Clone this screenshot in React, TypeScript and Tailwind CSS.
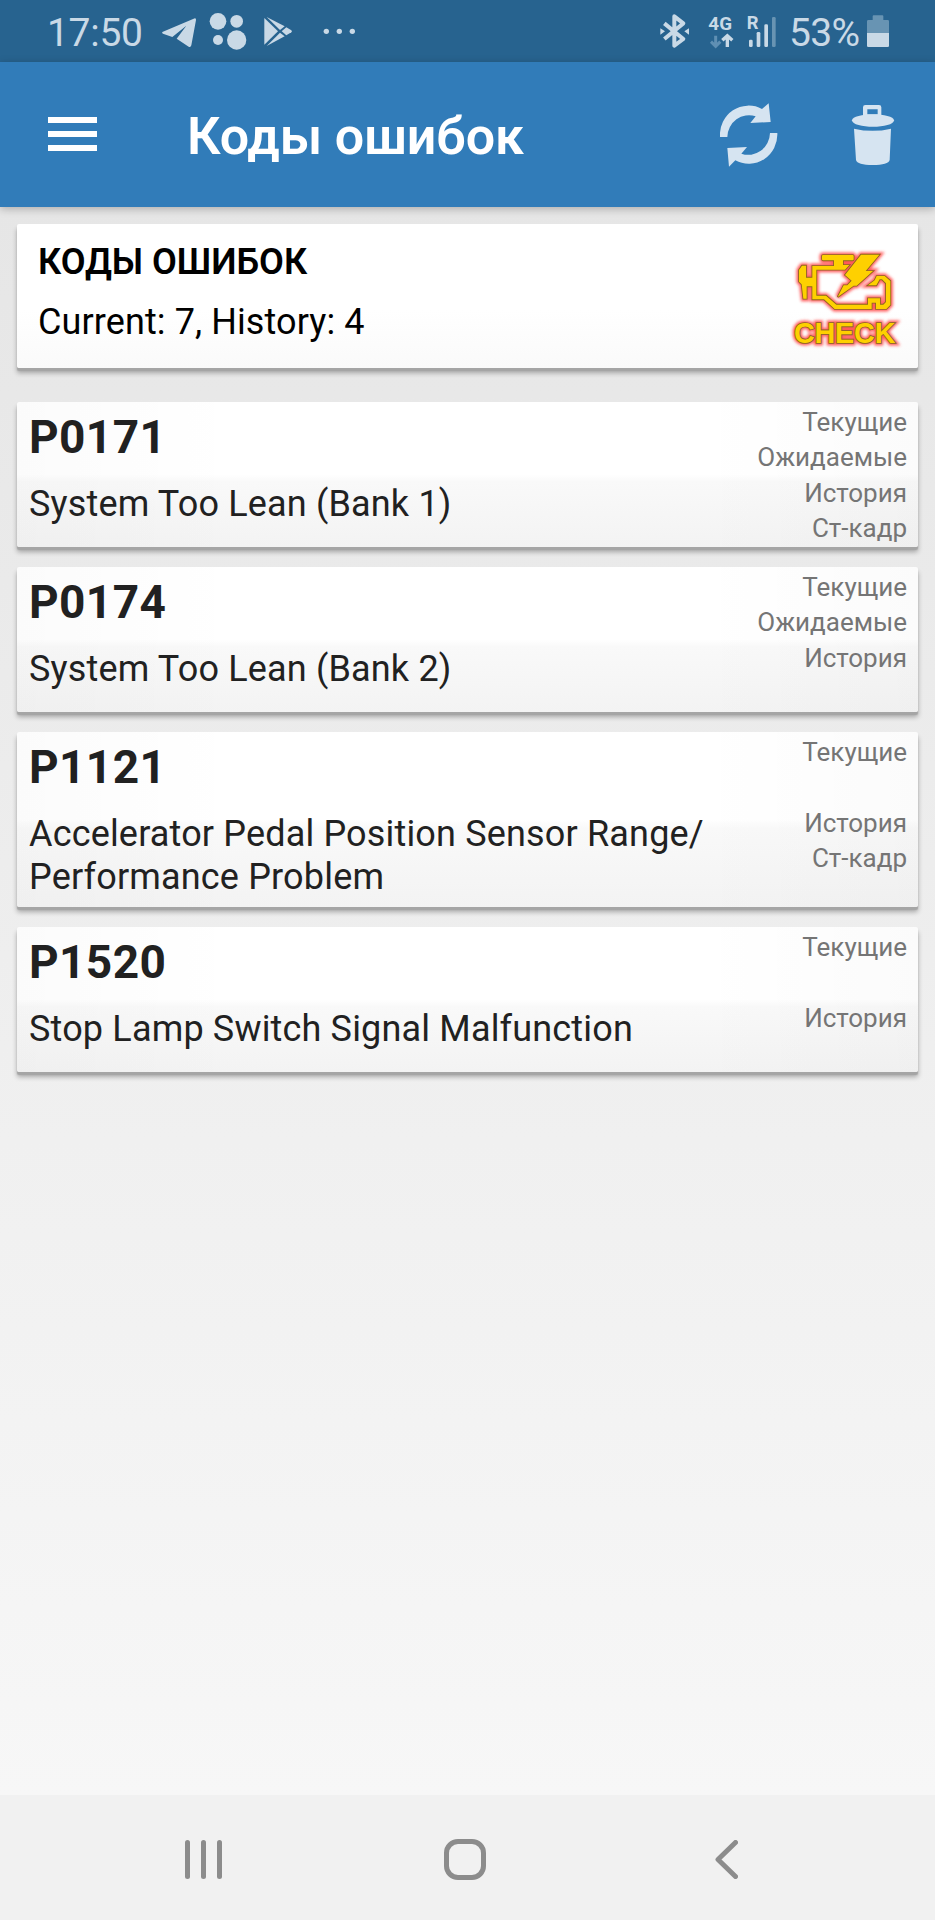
import React from "react";

interface TroubleCode {
  code: string;
  description: string;
  labels: string[];
}

const codes: TroubleCode[] = [
  {
    code: "P0171",
    description: "System Too Lean (Bank 1)",
    labels: ["Текущие", "Ожидаемые", "История", "Ст-кадр"],
  },
  {
    code: "P0174",
    description: "System Too Lean (Bank 2)",
    labels: ["Текущие", "Ожидаемые", "История", ""],
  },
  {
    code: "P1121",
    description: "Accelerator Pedal Position Sensor Range/ Performance Problem",
    labels: ["Текущие", "", "История", "Ст-кадр"],
  },
  {
    code: "P1520",
    description: "Stop Lamp Switch Signal Malfunction",
    labels: ["Текущие", "", "История", ""],
  },
];

const StatusBar = () => (
  <div className="flex h-[62px] shrink-0 items-center bg-[#27638f] pl-[47px] pr-[46px] text-[#c9d9e6]">
    <span className="w-[114px] pt-[3px] text-[39px] leading-[46px] tracking-[-0.3px]">17:50</span>
    {/* Telegram, dots, Play Store, more */}
    <svg className="h-[62px] w-[200px]" viewBox="480 0 600 186" fill="currentColor">
      <path d="M484 96 Q482 99 486 101 L514 111 L556 77 L527 116 L563 140 Q569 143 571 136 L585 60 Q586 53 578 56 Z" />
      <circle cx="651" cy="64" r="25" />
      <circle cx="707" cy="64" r="19" />
      <circle cx="651" cy="120" r="15" />
      <circle cx="707" cy="120" r="29" />
      <path d="M790 54 L831 94 L790 134 Z" />
      <path d="M797 51 L851 79 L837 90 Z" />
      <path d="M797 138 L851 109 L837 98 Z" />
      <path d="M856 82 L871 91 Q875 94 871 97 L856 106 L842 94 Z" />
      <circle cx="976" cy="94" r="8" />
      <circle cx="1015" cy="94" r="8" />
      <circle cx="1054" cy="94" r="8" />
    </svg>
    <div className="grow" />
    {/* Bluetooth, mobile data, signal */}
    <svg className="h-[62px] w-[120px]" viewBox="50 0 360 186" fill="currentColor">
      <path
        d="M69 70 L126 117 L99 137 V49 L126 70 L69 117"
        fill="none"
        stroke="currentColor"
        strokeWidth="12"
        strokeLinejoin="round"
      />
      <path d="M57 85 L71 94 L57 104 Z M143 85 L129 94 L143 104 Z" />
      <text x="201" y="91" fontSize="55" fontWeight="700" fontFamily="Roboto, sans-serif" textLength="71" lengthAdjust="spacingAndGlyphs">4G</text>
      <text x="316" y="86" fontSize="55" fontWeight="700" fontFamily="Roboto, sans-serif">R</text>
      <path d="M223 107 V138 M209 125 L223 139 L237 125" fill="none" stroke="#5f8fb3" strokeWidth="9" />
      <path d="M258 141 V108 M243 121 L258 107 L273 121" fill="none" stroke="currentColor" strokeWidth="10" />
      <rect x="323" y="119" width="11" height="22" rx="4" />
      <rect x="346" y="96" width="11" height="45" rx="4" />
      <rect x="369" y="73" width="11" height="68" rx="4" />
      <rect x="392" y="51" width="11" height="90" rx="4" fill="#6894b3" />
    </svg>
    <span className="ml-[11px] w-[78px] whitespace-nowrap pt-[3px] text-[39px] leading-[46px] tracking-[-0.7px]">53%</span>
    <svg className="h-[62px] w-[22px]" viewBox="681 0 66 186">
      <path d="M685 60 H698 V49 Q698 46 701 46 H727 Q730 46 730 49 V60 H743 Q747 60 747 64 V99 H681 V64 Q681 60 685 60 Z" fill="#6894b3" />
      <path d="M681 99 H747 V137 Q747 141 743 141 H685 Q681 141 681 137 Z" fill="#c9d9e6" />
    </svg>
  </div>
);

const AppBar = () => (
  <header className="relative flex h-[145px] shrink-0 items-center bg-[#317cb9] pl-[48px] text-white shadow-[0_2px_8px_rgba(0,0,0,0.25)]">
    <div className="mt-[-2px] flex w-[49px] flex-col gap-[8px]">
      <div className="h-[6px] bg-white" />
      <div className="h-[6px] bg-white" />
      <div className="h-[6px] bg-white" />
    </div>
    <h1 className="ml-[90px] grow pt-[5px] text-[52px] font-semibold leading-[60px] tracking-[-0.1px]">Коды ошибок</h1>
    <svg className="h-[145px] w-[215px]" viewBox="240 186 645 435" fill="#d6e4f1">
      {/* Refresh */}
      <path d="M240 411 A86 88 0 0 1 366 327 L386 310 L392 366 L331 369 L347 349 A65 67 0 0 0 262 411 Z" />
      <path d="M412 399 A86 88 0 0 1 286 481 L267 500 L262 444 L321 441 L304 461 A65 67 0 0 0 390 399 Z" />
      {/* Trash can */}
      <path d="M669 348 V322 Q669 315 676 315 H717 Q724 315 724 322 V348 Z M682 328 V343 H713 V328 Z" fillRule="evenodd" />
      <path d="M636 361 C636 338 762 338 762 361 C762 387 636 387 636 361 Z" />
      <path d="M642 386 Q698 399 753 386 L749 480 Q745 495 698 495 Q652 495 648 480 Z" />
    </svg>
  </header>
);

const CheckEngine = () => (
  <svg className="h-[110px] w-[120px]" viewBox="50 80 360 330">
    <defs>
      <filter id="glow" x="-20%" y="-20%" width="140%" height="140%">
        <feGaussianBlur stdDeviation="5" />
      </filter>
      <g id="engine">
        <path d="M158 119 H247 Q250 119 250 122 V132 Q250 135 247 135 H218 V149 H237 L224 163 H138 V241 H167 L198 268 H293 V249 H329 V268 H339 L347 260 V204 L335 192 H328 L318 210 H293 L313 195 L319 182 H343 L360 197 V269 L348 281 H317 V262 H304 V281 H193 L161 252 H126 V213 H109 V250 H99 L94 207 L86 199 V164 L95 151 H107 V187 H126 V152 H191 V135 H158 Q155 135 155 132 V122 Q155 119 158 119 Z" />
        <path d="M272 118 H327 L286 167 H308 L259 211 H250 L202 245 L220 210 H231 L244 196 L224 179 Z" />
        <text x="71" y="383" fontSize="86" fontWeight="700" fontFamily="'Liberation Sans', sans-serif" textLength="304">CHECK</text>
      </g>
    </defs>
    <use href="#engine" fill="#ff3333" stroke="#ff3333" strokeWidth="15" opacity="0.8" filter="url(#glow)" />
    <use href="#engine" fill="#fed000" stroke="#8a6620" strokeWidth="5" paintOrder="stroke" />
  </svg>
);

const CodeCard = ({ code, description, labels }: TroubleCode) => (
  <div className="flex min-h-[145px] rounded-[2px] bg-[linear-gradient(to_right,rgba(0,0,0,0.015),transparent_25%,transparent_75%,rgba(0,0,0,0.015)),linear-gradient(to_bottom,#ffffff_0%,#ffffff_50%,#f9f9f9_55%,#f3f3f3_100%)] pb-[9px] pl-[12px] pr-[11px] shadow-[0_3px_1px_#a5a5a5,0_5px_5px_rgba(0,0,0,0.3)]">
    <div className="w-[720px] pt-[8px] text-[#212121]">
      <div className="text-[46px] font-bold leading-[54px] tracking-[0.4px]">{code}</div>
      <div className="mt-[19px] text-[36px] leading-[42.5px] tracking-[0.17px]">{description}</div>
    </div>
    <div className="mb-[-9px] grow pt-[3px] text-right text-[26px] text-[#757575]">
      {labels.map((label, i) => (
        <div key={i} className="h-[35.4px] leading-[35.4px]">
          {label}
        </div>
      ))}
    </div>
  </div>
);

const NavBar = () => (
  <nav className="flex h-[125px] shrink-0 items-center bg-[#f1f1f1] pl-[185px] pr-[197px] pt-[3px]">
    <div className="flex w-[37px] justify-between">
      <div className="h-[39px] w-[5px] rounded-full bg-[#8c8c8c]" />
      <div className="h-[39px] w-[5px] rounded-full bg-[#8c8c8c]" />
      <div className="h-[39px] w-[5px] rounded-full bg-[#8c8c8c]" />
    </div>
    <div className="ml-[222px] h-[41px] w-[42px] rounded-[14px] border-[5px] border-[#8c8c8c]" />
    <div className="grow" />
    <svg className="h-[39px] w-[23px]" viewBox="0 0 23 39" fill="none" stroke="#8c8c8c" strokeWidth="5" strokeLinecap="round" strokeLinejoin="round">
      <path d="M20.5 2.5 L3 19.5 L20.5 36.5" />
    </svg>
  </nav>
);

export default function App() {
  return (
    <div className="flex h-[1920px] w-[935px] flex-col overflow-hidden bg-[linear-gradient(to_bottom,#e6e6e6_207px,#f7f7f7_1795px)] font-['Roboto',sans-serif]">
      <StatusBar />
      <AppBar />
      <main className="flex grow flex-col px-[17px] pt-[17px]">
        <section className="flex h-[144px] shrink-0 justify-between rounded-[2px] bg-[linear-gradient(to_bottom,#ffffff_60%,#fafafa_100%)] pl-[21px] pr-[11px] text-black shadow-[0_3px_1px_#a5a5a5,0_5px_5px_rgba(0,0,0,0.3)]">
          <div className="pt-[17px]">
            <h2 className="text-[36px] font-semibold leading-[42px]">КОДЫ ОШИБОК</h2>
            <p className="mt-[18px] text-[36px] leading-[42px] tracking-[0.1px]">Current: 7, History: 4</p>
          </div>
          <div className="pt-[18px]">
            <CheckEngine />
          </div>
        </section>
        <div className="mt-[34px] flex flex-col gap-[20px]">
          {codes.map((item) => (
            <CodeCard key={item.code} {...item} />
          ))}
        </div>
      </main>
      <NavBar />
    </div>
  );
}
